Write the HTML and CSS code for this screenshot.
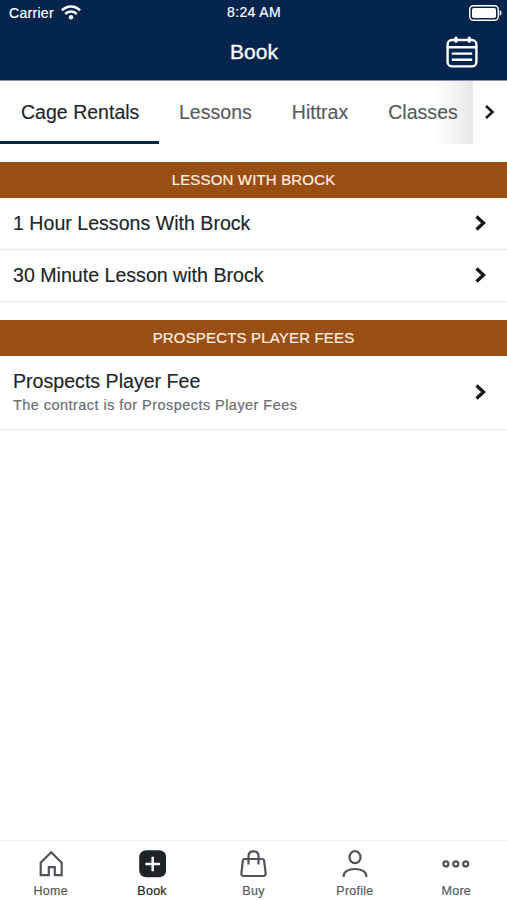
FILE: index.html
```html
<!DOCTYPE html>
<html lang="en">
<head>
<meta charset="utf-8">
<title>Book</title>
<link rel="stylesheet" href="styles.css">
</head>
<body>
<div class="app">
  <header class="header">
    <div class="status">
      <div class="carrier"><span>Carrier</span>
        <svg width="20" height="15" viewBox="0 0 20 15" fill="none" stroke="#fff" stroke-width="2.500"><path d="M.9 5.400C6 .2 14 .2 19.100 5.400M4.200 9c3.300-3.200 8.300-3.200 11.600 0"/><circle cx="10" cy="12.200" r="2.200" fill="#fff" stroke="none"/></svg>
      </div>
      <span class="time">8:24 AM</span>
      <svg class="battery" width="33" height="16" viewBox="0 0 33 16"><rect x=".75" y=".75" width="28.500" height="14.500" rx="3.800" fill="none" stroke="#fff" stroke-width="1.400"/><rect x="3" y="3" width="24" height="10" rx="1.700" fill="#fff"/><path d="M30.700 5.300c1.300.3 1.800 1.400 1.800 2.700s-.5 2.400-1.800 2.700Z" fill="#fff"/></svg>
    </div>
    <div class="titlebar">
      <h1>Book</h1>
      <svg class="calendar" width="32" height="32" viewBox="0 0 32 32" fill="none" stroke="#fff" stroke-width="2.400" stroke-linecap="round"><rect x="1.600" y="4" width="28.800" height="26.400" rx="4.500"/><path d="M2 11.200h28"/><path d="M10 2v3.200M23.300 2v3.200" stroke-width="3.200"/><path d="M7 17.600h18M7 23.800h18" stroke-linecap="square"/></svg>
    </div>
  </header>
  <nav class="tabs">
    <div class="tab-list">
      <a class="tab active">Cage Rentals</a><a class="tab">Lessons</a><a class="tab">Hittrax</a><a class="tab">Classes</a>
    </div>
    <div class="tab-next"><svg width="11" height="14" viewBox="0 0 11 14" fill="none" stroke="#15171a" stroke-width="2.500"><path d="m2 1 6.500 6L2 13"/></svg></div>
  </nav>
  <main>
    <section>
      <h2>LESSON WITH BROCK</h2>
      <div class="row"><span class="name">1 Hour Lessons With Brock</span><svg class="chev" width="12" height="16" viewBox="0 0 12 16"><path d="m1.500 1.500 7 6.500-7 6.500"/></svg></div>
      <div class="row"><span class="name">30 Minute Lesson with Brock</span><svg class="chev" width="12" height="16" viewBox="0 0 12 16"><path d="m1.500 1.500 7 6.500-7 6.500"/></svg></div>
    </section>
    <section>
      <h2>PROSPECTS PLAYER FEES</h2>
      <div class="row tall"><div><div class="name">Prospects Player Fee</div><div class="desc">The contract is for Prospects Player Fees</div></div><svg class="chev" width="12" height="16" viewBox="0 0 12 16"><path d="m1.500 1.500 7 6.500-7 6.500"/></svg></div>
    </section>
  </main>
  <footer class="bottom">
    <a class="item"><svg width="28" height="28" viewBox="0 0 28 28"><path d="M3.700 25.200V12.800L14.200 2.300l10.500 10.500v12.400h-6.900v-8.100h-6v8.100Z"/></svg><span>Home</span></a>
    <a class="item current"><svg width="28" height="28" viewBox="0 0 28 28"><rect x="1.200" y=".300" width="27" height="27" rx="7" fill="#202327" stroke="none"/><path d="M14.700 6.700v14.600M7.400 14H22" stroke="#fff" stroke-width="2.500"/></svg><span>Book</span></a>
    <a class="item"><svg width="28" height="28" viewBox="0 0 28 28"><path d="M5.600 9h17.800c1 0 1.500.5 1.700 1.400l1.500 12.800c.2 1.900-.6 2.800-2.200 2.800H4.600c-1.600 0-2.400-.9-2.200-2.800l1.500-12.800c.2-.9.700-1.400 1.700-1.400Z"/><path d="M9.500 14.500V6.200c0-3 2-4.800 5-4.800s5 1.800 5 4.800v8.300"/></svg><span>Buy</span></a>
    <a class="item"><svg width="28" height="28" viewBox="0 0 28 28"><ellipse cx="14" cy="7.200" rx="5.500" ry="6"/><path d="M2.700 27v-1.200C2.700 21.700 7.500 19 14 19s11.300 2.700 11.300 6.800V27"/></svg><span>Profile</span></a>
    <a class="item"><svg width="28" height="28" viewBox="0 0 28 28"><circle cx="3.900" cy="13.900" r="2.500"/><circle cx="13.800" cy="13.900" r="2.500"/><circle cx="23.700" cy="13.900" r="2.500"/></svg><span>More</span></a>
  </footer>
</div>
</body>
</html>
```
FILE: styles.css
```css
* { box-sizing: border-box; }
body { margin: 0; background: #fff; font-family: "Liberation Sans", Arial, sans-serif; color: #222427; }
.app { height: 900px; display: flex; flex-direction: column; }
svg { display: block; flex: none; }
.header { height: 81px; background: #03244d; color: #fff; border-bottom: 1px solid #8790ae; flex: none; }
.status { display: grid; grid-template-columns: 1fr auto 1fr; height: 25px; align-items: center; padding: 0 5px 0 9px; font-size: 14px; -webkit-text-stroke: .2px #fff; }
.carrier { display: flex; align-items: center; gap: 7px; letter-spacing: .3px; }
.time { letter-spacing: .35px; padding-bottom: 1px; margin-right: 3px; }
.battery { justify-self: end; }
.titlebar { display: grid; grid-template-columns: 1fr auto 1fr; align-items: center; height: 54px; padding-right: 29px; padding-left: 30px; }
h1 { grid-column: 2; margin: 0; font-size: 21px; font-weight: 400; letter-spacing: 0; -webkit-text-stroke: .35px #fff; }
.calendar { justify-self: end; }
.tabs { height: 63px; display: flex; flex: none; }
.tab-list { width: 473px; display: flex; background: linear-gradient(90deg, transparent 434px, #f3f3f3 453px, #e8e8e8 473px); }
.tab { padding: 20px 20px 0; font-size: 19.500px; line-height: 23px; color: #57595d; letter-spacing: .02px; white-space: nowrap; -webkit-text-stroke: .15px currentColor; }
.tab.active { padding-left: 21px; width: 159px; flex: none; color: #222427; border-bottom: 3px solid #03244d; }
.tab-next { flex: 1; display: flex; align-items: center; padding: 0 0 1px 11px; }
section { margin-top: 18px; }
h2 { height: 36px; margin: 0; background: #994e13; color: #fff0e2; font-size: 15px; font-weight: 400; line-height: 35px; text-align: center; letter-spacing: .17px; -webkit-text-stroke: .2px currentColor; }
.row { height: 52px; display: flex; align-items: center; justify-content: space-between; padding: 0 20px 2px 13px; border-bottom: 1px solid #e9ebeb; }
.tall { height: 74px; }
.name { font-size: 19.600px; line-height: 24px; -webkit-text-stroke: .15px currentColor; }
.desc { padding-top: 2px; margin-bottom: -1px; font-size: 14.500px; line-height: 21px; letter-spacing: .45px; color: #6b6e72; -webkit-text-stroke: .2px currentColor; }
.chev { fill: none; stroke: #15171a; stroke-width: 3.300; }
.bottom { height: 60px; margin-top: auto; display: grid; grid-template-columns: repeat(5, 1fr); border-top: 1px solid #f0f1f1; }
.item { display: flex; flex-direction: column; align-items: center; padding-top: 9px; font-size: 12.500px; line-height: 16px; letter-spacing: .25px; color: #56595d; -webkit-text-stroke: .2px currentColor; }
.item span { margin-top: 5px; }
.item svg { fill: none; stroke: #505458; stroke-width: 2.200; }
.current { color: #222427; }
```
